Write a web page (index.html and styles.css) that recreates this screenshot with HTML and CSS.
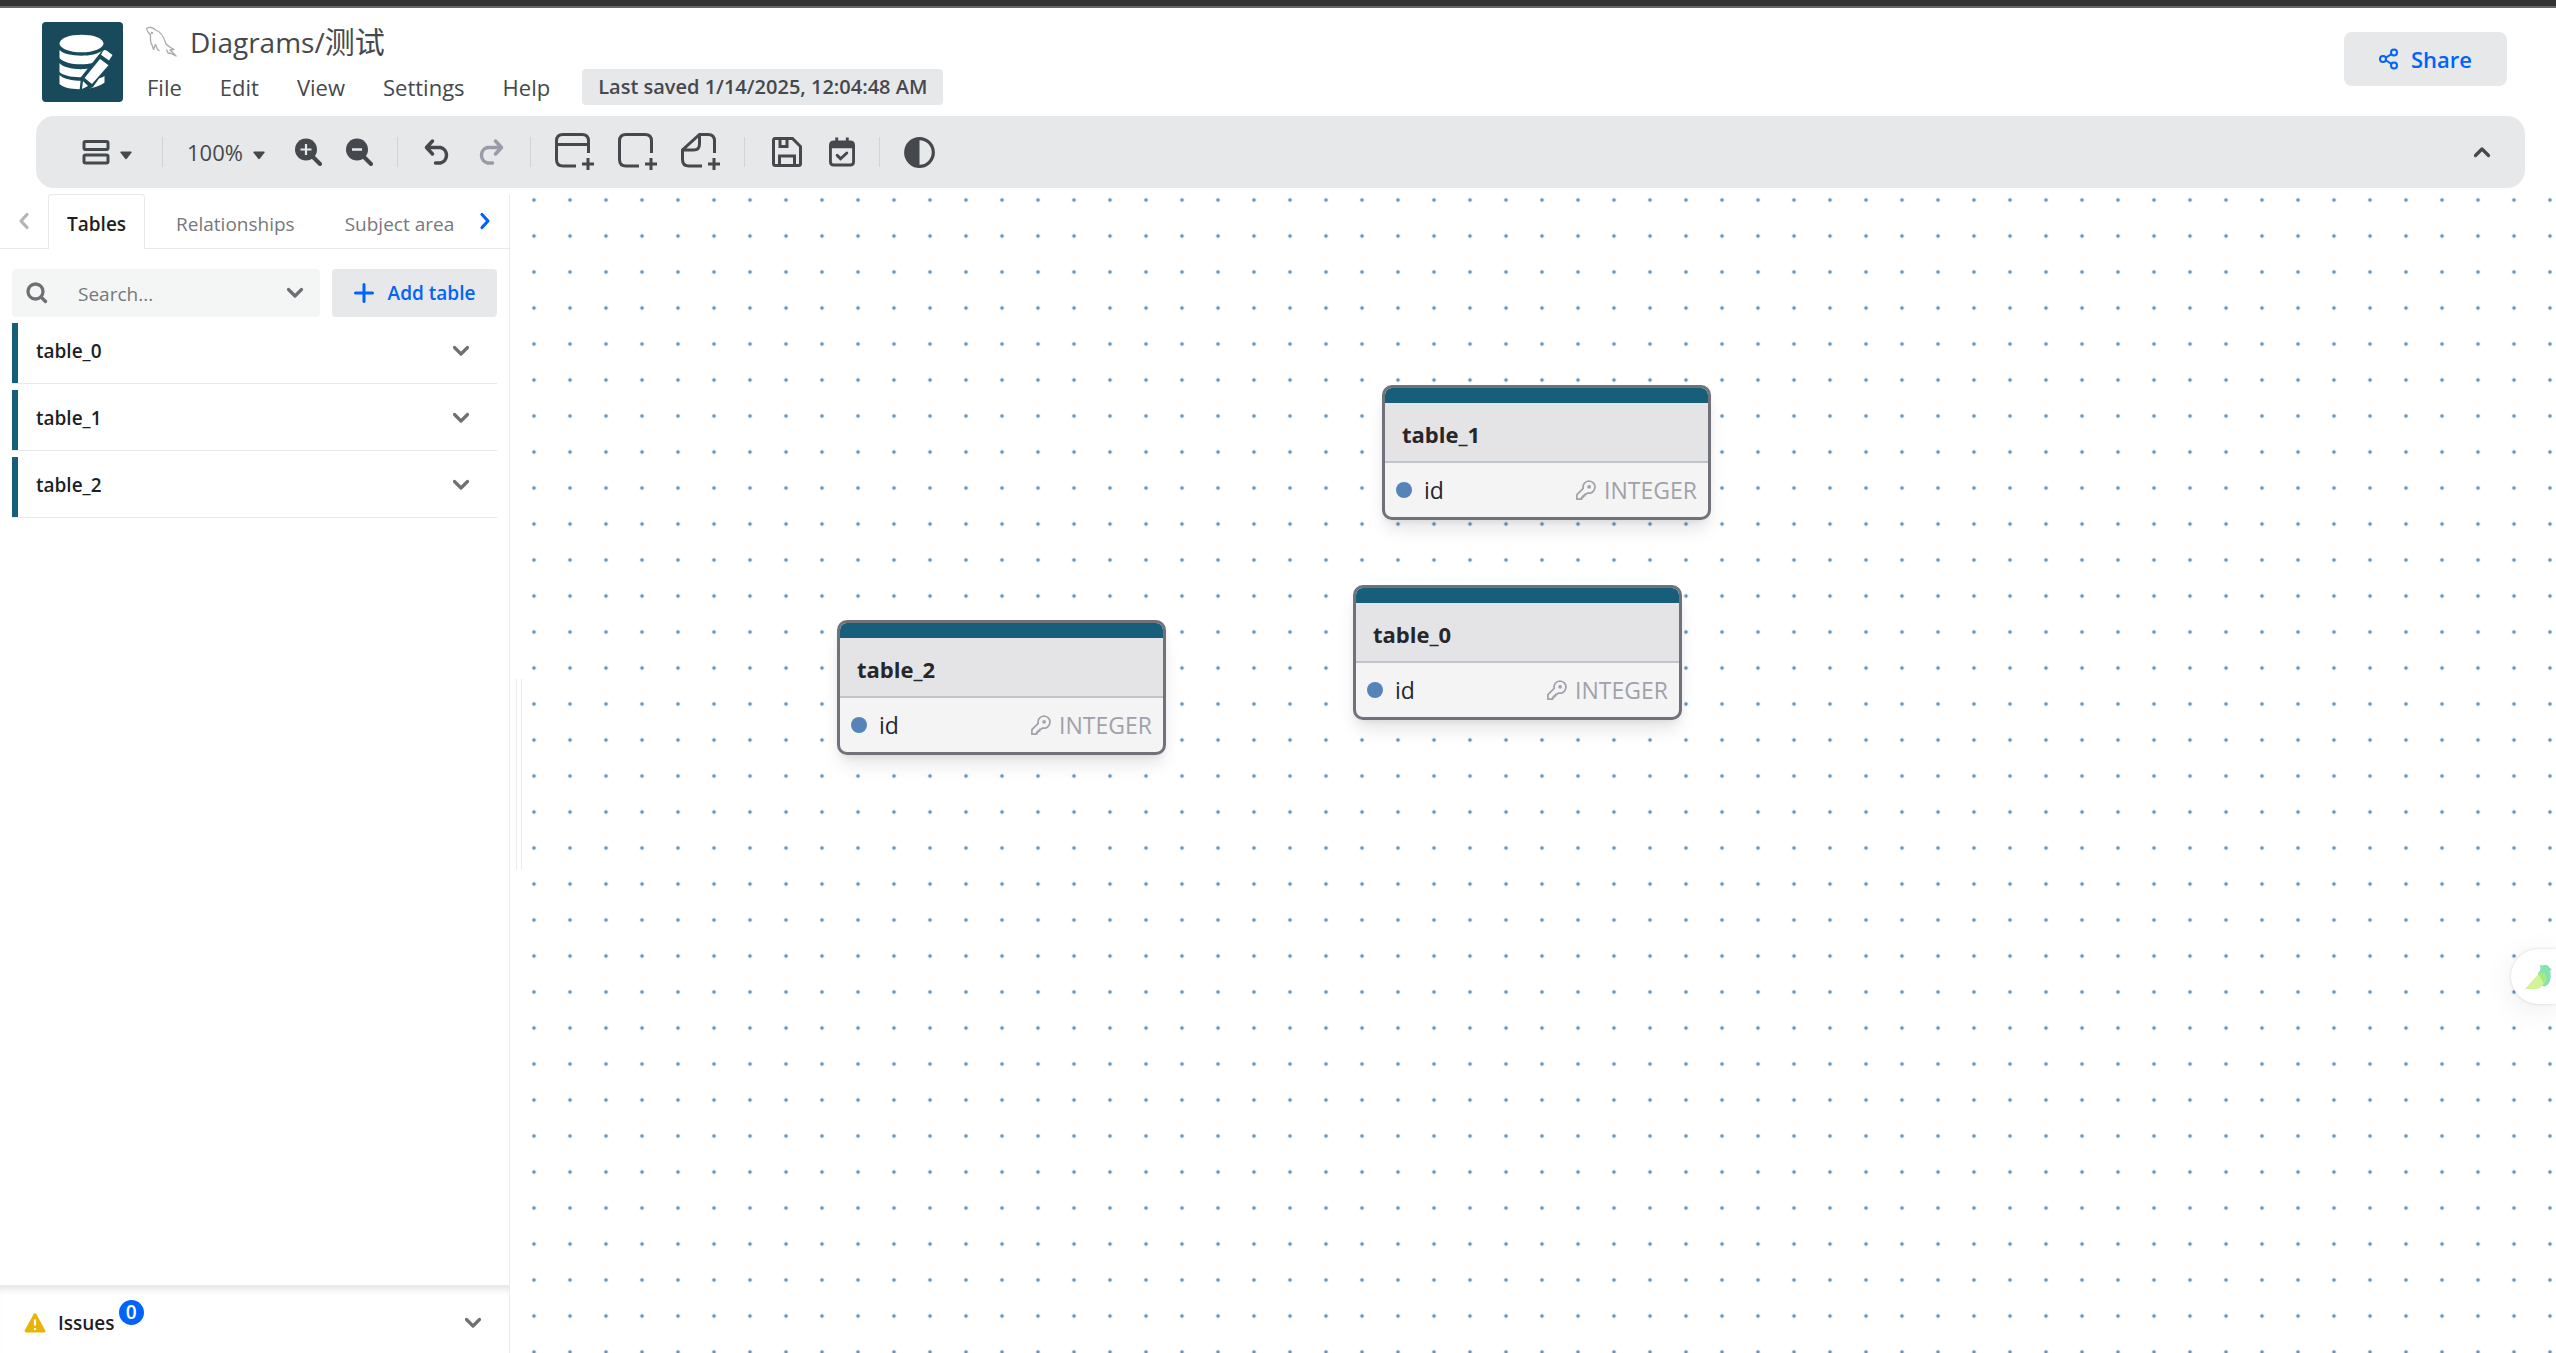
FILE: index.html
```html
<!DOCTYPE html>
<html lang="en">
<head>
<meta charset="utf-8">
<title>Diagrams/测试</title>
<link rel="stylesheet" href="styles.css">
</head>
<body>
<svg class="defs" aria-hidden="true">
  <symbol id="down" viewBox="0 0 18 12"><path d="M2.500 2.500 9 9l6.500-6.500" fill="none" stroke="currentColor" stroke-width="3.200" stroke-linecap="round" stroke-linejoin="round"/></symbol>
  <symbol id="caret" viewBox="0 0 12 9"><path d="M1 .5h10q1.200 0 .5 1.200L7 7.600Q6 8.700 5 7.600L.5 1.700Q-.2.500 1 .5Z" fill="currentColor"/></symbol>
  <symbol id="key" viewBox="0 0 20 20"><g fill="none" stroke="currentColor" stroke-width="1.700" stroke-linejoin="round"><path d="M13 1a6.100 6.100 0 1 1-1.700 12L10 14.300H8.600v1.600H7v1.500H5.600v1.800H.9v-4.500l6.300-6.300A6.100 6.100 0 0 1 13 1Z"/><circle cx="13.100" cy="6.800" r="1"/></g></symbol>
</svg>
<div class="window-edge"></div>
<header class="header">
  <a class="logo" href="#" aria-label="Home">
    <svg viewBox="0 0 81 80">
      <rect width="81" height="80" rx="4" fill="#184a5b"/>
      <g fill="#fff">
        <ellipse cx="39.500" cy="21.500" rx="22" ry="8.800"/>
        <path d="M17.500 28c6 7 34 8 43 .5v7C52 45 24 44 17.500 36Z"/>
        <path d="M17.500 41c6 8 34 8 43 1v7C52 57 24 57 17.500 50Z"/>
        <path d="M17.500 53c6 7 34 8 45 1v6.500C54 68 26 70 17.500 62Z"/>
      </g>
      <path d="M37.500 69l1.500-14L61 27.500q2-2.500 5-.5l5 4q2.500 2 .5 5L51 65l-8 4Z" fill="#184a5b"/>
      <g fill="#fff"><path d="M58 37l8.500 6.200L50 62 42.500 56Z"/><path d="M64.500 28.500l6 4.500-3.500 5.500-8-5.800 2-3.500q1.300-1.800 3.500-.7Z"/><path d="M41 59l5 5-6 3Z"/></g>
    </svg>
  </a>
  <div class="heading">
    <div class="title-row">
      <svg class="dolphin" viewBox="0 0 32 32" fill="none" stroke="#a9a9a9" stroke-width="1.300" stroke-linejoin="round"><path d="M1.500 2.500C4 .8 8 1 10.500 4c5 1.500 8.500 7 10.500 14 1.500 2 5 3.500 8 5.500l-4 .5 6 6-5-2.500-3-.5-1.500-3.500M1.500 2.500c.5 3 2 4 4 6.500 0 3-.5 8 1.500 10l1.500 4.500 2-5 2 5 2 1.500"/><circle cx="7" cy="7" r=".5"/></svg>
      <h1 class="title">Diagrams/<span class="han" lang="zh">测试</span></h1>
    </div>
    <nav class="menu">
      <button>File</button><button>Edit</button><button>View</button><button>Settings</button><button>Help</button>
      <span class="saved">Last saved 1/14/2025, 12:04:48 AM</span>
    </nav>
  </div>
  <button class="share">
    <svg width="20" height="22" viewBox="0 0 20 22" fill="none" stroke="currentColor" stroke-width="2"><circle cx="4" cy="11" r="3"/><circle cx="15" cy="4.500" r="3"/><circle cx="15" cy="17.500" r="3"/><path d="M7 9.500l5.500-3.300M7 12.500l5.500 3.300"/></svg>
    Share
  </button>
</header>

<div class="toolbar" role="toolbar">
  <button class="tool dropdown" aria-label="Layout">
    <svg width="28" height="26" viewBox="0 0 28 26" fill="none" stroke="currentColor" stroke-width="3"><rect x="2" y="2.500" width="24" height="8" rx="1.500"/><rect x="2" y="16" width="24" height="8" rx="1.500"/></svg>
    <svg class="caret" width="12" height="9"><use href="#caret"/></svg>
  </button>
  <span class="divider"></span>
  <button class="tool dropdown zoom"><span>100%</span><svg class="caret" width="12" height="9"><use href="#caret"/></svg></button>
  <button class="tool" aria-label="Zoom in"><svg width="27" height="28" viewBox="0 0 27 28"><path d="M17 18l8 8" stroke="currentColor" stroke-width="4" stroke-linecap="round"/><circle cx="11" cy="11.500" r="11" fill="currentColor"/><path d="M5.500 11.500h11M11 6v11" stroke="#e7e8ea" stroke-width="2.200"/></svg></button>
  <button class="tool" aria-label="Zoom out"><svg width="27" height="28" viewBox="0 0 27 28"><path d="M17 18l8 8" stroke="currentColor" stroke-width="4" stroke-linecap="round"/><circle cx="11" cy="11.500" r="11" fill="currentColor"/><path d="M6 11.500h10" stroke="#e7e8ea" stroke-width="2.500"/></svg></button>
  <span class="divider"></span>
  <button class="tool" aria-label="Undo"><svg width="30" height="28" viewBox="0 0 30 28" fill="none" stroke="currentColor" stroke-width="3.500" stroke-linecap="round" stroke-linejoin="round"><path d="M10.500 3L4.500 9.500l6 6.500M5 9.500H18.500a8 8 0 0 1 0 15.500h-5"/></svg></button>
  <button class="tool" aria-label="Redo" disabled><svg width="30" height="28" viewBox="0 0 30 28" fill="none" stroke="currentColor" stroke-width="3.500" stroke-linecap="round" stroke-linejoin="round"><path d="M19.500 3l6 6.500-6 6.500M25 9.500H11.500a8 8 0 0 0 0 15.500h5"/></svg></button>
  <span class="divider"></span>
  <button class="tool" aria-label="Add table"><svg width="39" height="38" viewBox="0 0 39 38" fill="none" stroke="currentColor" stroke-width="3"><path d="M21 33H8q-6.500 0-6.500-6.500V8Q1.500 1.500 8 1.500h19Q33.500 1.500 33.500 8v12M2 11.500h31"/><path d="M27 31h12M33 25v12"/></svg></button>
  <button class="tool" aria-label="Add area"><svg width="39" height="38" viewBox="0 0 39 38" fill="none" stroke="currentColor" stroke-width="3"><path d="M21 33H8q-6.500 0-6.500-6.500V8Q1.500 1.500 8 1.500h19Q33.500 1.500 33.500 8v12M27 31h12M33 25v12"/></svg></button>
  <button class="tool" aria-label="Add note"><svg width="39" height="38" viewBox="0 0 39 38" fill="none" stroke="currentColor" stroke-width="3"><path d="M21 33H8q-6.500 0-6.500-6.500V17L18.500 1.500H27q6.500 0 6.500 6.500v12M18.500 2v9q0 6-6 6H2M27 31h12M33 25v12"/></svg></button>
  <span class="divider"></span>
  <button class="tool" aria-label="Save"><svg width="36" height="30" viewBox="0 0 36 30" fill="none" stroke="currentColor" stroke-width="3"><path d="M6 1.500h17.500l8 8v17q0 2-2 2H6.500q-2 0-2-2v-23q0-2 1.500-2ZM10.500 28v-9h15v9M11 2v7.500h7V2"/></svg></button>
  <button class="tool" aria-label="To-do"><svg width="26" height="30" viewBox="0 0 27 30"><path d="M5 3h17q5 0 5 5v17q0 5-5 5H5q-5 0-5-5V8Q0 3 5 3Z" fill="currentColor"/><path d="M3 11h21v14q0 2-2 2H5q-2 0-2-2Z" fill="#e7e8ea"/><path d="M8 0v5M19 0v5" stroke="currentColor" stroke-width="3"/><path d="M8.500 18.500l3.500 3.500 6.500-6" fill="none" stroke="currentColor" stroke-width="3" stroke-linecap="round"/></svg></button>
  <span class="divider"></span>
  <button class="tool" aria-label="Theme"><svg width="31" height="31" viewBox="0 0 31 31"><circle cx="15.500" cy="15.500" r="13.800" fill="none" stroke="currentColor" stroke-width="3.200"/><path d="M15.500 1v29a14.500 14.500 0 0 1 0-29Z" fill="currentColor"/></svg></button>
  <button class="tool collapse" aria-label="Hide header"><svg class="flip" width="18" height="12"><use href="#down"/></svg></button>
</div>

<main class="workspace">
  <aside class="sidebar">
    <div class="tabs">
      <button class="arrow" aria-label="Previous tabs" disabled><svg width="12" height="18" viewBox="0 0 12 18" fill="none" stroke="currentColor" stroke-width="3.200" stroke-linecap="round" stroke-linejoin="round"><path d="M9 2.500L3 9l6 6.500"/></svg></button>
      <div class="tab-list" role="tablist">
        <button class="tab active" role="tab" aria-selected="true">Tables</button>
        <button class="tab" role="tab">Relationships</button>
        <button class="tab" role="tab">Subject areas</button>
      </div>
      <button class="arrow next" aria-label="Next tabs"><svg width="12" height="18" viewBox="0 0 12 18" fill="none" stroke="currentColor" stroke-width="3.200" stroke-linecap="round" stroke-linejoin="round"><path d="M3 2.500L9 9l-6 6.500"/></svg></button>
    </div>
    <div class="filter">
      <label class="search">
        <svg width="22" height="22" viewBox="0 0 22 22" fill="none" stroke="currentColor" stroke-width="3.300" stroke-linecap="round"><circle cx="9.500" cy="9.500" r="7.500"/><path d="M15 15l4.500 4.500"/></svg>
        <input type="text" placeholder="Search..." aria-label="Search tables">
        <svg width="18" height="12"><use href="#down"/></svg>
      </label>
      <button class="add"><svg width="20" height="20" viewBox="0 0 20 20" stroke="currentColor" stroke-width="3" stroke-linecap="round"><path d="M10 1.500v17M1.500 10h17"/></svg>Add table</button>
    </div>
    <div class="table-list">
      <button class="entry">table_0<svg width="18" height="12"><use href="#down"/></svg></button>
      <button class="entry">table_1<svg width="18" height="12"><use href="#down"/></svg></button>
      <button class="entry">table_2<svg width="18" height="12"><use href="#down"/></svg></button>
    </div>
    <button class="issues">
      <svg width="22" height="20" viewBox="0 0 22 20"><path d="M9.600 1.200q1.400-1.800 2.800 0l8.800 16q.8 2-1.200 2.300H2Q0 19.200.8 17.200Z" fill="#eab308"/><path d="M11 6.500v6M11 15v2" stroke="#fff" stroke-width="2.200"/></svg>
      <span>Issues</span><span class="badge">0</span>
      <svg class="end" width="18" height="12"><use href="#down"/></svg>
    </button>
  </aside>
  <div class="resizer"><span class="grip"></span></div>
  <section class="canvas">
    <article class="node node-1"><h2>table_1</h2><div class="field"><i></i><span>id</span><svg width="20" height="20"><use href="#key"/></svg><span class="type">INTEGER</span></div></article>
    <article class="node node-0"><h2>table_0</h2><div class="field"><i></i><span>id</span><svg width="20" height="20"><use href="#key"/></svg><span class="type">INTEGER</span></div></article>
    <article class="node node-2"><h2>table_2</h2><div class="field"><i></i><span>id</span><svg width="20" height="20"><use href="#key"/></svg><span class="type">INTEGER</span></div></article>
    <button class="float" aria-label="Assistant">
      <svg width="28" height="26" viewBox="0 0 28 26"><path d="M14.500.5q2 1.500 5 .5 4-.5 5 3l2.500 1-2 2c1.500 5 1 14-6 15.500l-6-2V9q4-3 1.500-8.500Z" fill="#86e2b0"/><path d="M0 25L13 10.500q3-3 6.500-1 2 4 .5 8-2.500 6-8 7.500Z" fill="#d2f396"/><path d="M13 10.500q4-3 6.500-1 2 5-1 10Q16 13 13 10.500Z" fill="#a6e97c"/></svg>
    </button>
  </section>
</main>
</body>
</html>
```
FILE: styles.css
```css
* { box-sizing: border-box; }
body {
  margin: 0;
  height: 100vh;
  display: flex;
  flex-direction: column;
  overflow: hidden;
  background: #fff;
  color: #1c1f23;
  font: 20px/30px "Open Sans", "Noto Sans CJK SC", sans-serif;
}
button {
  border: 0;
  padding: 0;
  background: none;
  color: inherit;
  font: inherit;
  white-space: nowrap;
}
svg { display: block; flex: none; }
.defs { position: absolute; width: 0; height: 0; }
.window-edge { flex: none; height: 8px; background: #333; border-bottom: 2px solid #666; }

.header {
  flex: none;
  display: flex;
  align-items: flex-start;
  height: 108px;
  padding: 14px 49px 0 42px;
  color: #45484c;
}
.logo { width: 81px; margin-right: 22px; }
.heading { flex: 1; }
.title-row { display: flex; align-items: center; gap: 13px; height: 40px; }
.dolphin { width: 32px; height: 32px; }
.title { margin: 0; font-size: 28px; font-weight: 400; line-height: 40px; }
.han { font-size: 30px; }
.menu { display: flex; align-items: center; gap: 38px; height: 50px; padding-left: 2px; font-size: 22px; }
.saved {
  margin-left: -6px;
  padding: 3px 16px;
  border-radius: 4px;
  background: #e7e8ea;
  font-size: 20px;
  font-weight: 600;
}
.share {
  display: flex;
  align-items: center;
  justify-content: center;
  gap: 12px;
  width: 163px;
  height: 54px;
  margin-top: 10px;
  border-radius: 8px;
  background: #e7e8ea;
  color: #0064fa;
  font-size: 22px;
  font-weight: 600;
}

.toolbar {
  flex: none;
  display: flex;
  align-items: center;
  height: 72px;
  margin: 0 31px 0 36px;
  padding: 0 22px 0 34px;
  border-radius: 18px;
  background: #e7e8ea;
  color: #45484c;
}
.tool { display: flex; align-items: center; padding: 0 12px; height: 42px; font-size: 22px; }
.tool:disabled { color: #999ba9; }
.dropdown { gap: 10px; padding-right: 18px; }
.zoom { width: 108px; justify-content: space-between; gap: 0; }
.caret { margin-top: 6px; }
.divider { width: 1px; height: 30px; margin: 0 12px; background: #d2d4d8; }
.collapse { margin-left: auto; }
.flip { transform: rotate(180deg); }

.workspace { flex: 1; display: flex; min-height: 0; }
.sidebar {
  flex: none;
  display: flex;
  flex-direction: column;
  width: 510px;
  margin-top: 6px;
  border-right: 1px solid #ebebec;
}
.tabs { display: flex; height: 55px; border-bottom: 1px solid #e8e9ea; }
.arrow { display: flex; align-items: center; justify-content: center; width: 48px; color: #0064fa; }
.arrow:disabled { color: #b4b5b7; }
.next { width: 48px; margin-left: auto; }
.tab-list { display: flex; gap: 12px; flex: none; width: 407px; height: 55px; overflow: hidden; }
.tab {
  flex: none;
  padding: 4px 18px 0;
  border: 1px solid transparent;
  border-bottom: 0;
  border-radius: 4px 4px 0 0;
  color: #76787b;
  font-size: 19px;
}
.active { border-color: #e8e9ea; background: #fff; color: #1c1f23; font-weight: 600; }
.filter { display: flex; gap: 12px; padding: 20px 12px 6px; }
.search {
  flex: 1;
  display: flex;
  align-items: center;
  min-width: 0;
  height: 48px;
  padding: 0 16px 0 14px;
  border-radius: 4px;
  background: #f4f5f5;
  color: #6e7073;
}
.search input {
  flex: 1;
  min-width: 0;
  padding: 2px 0 0 30px;
  border: 0;
  background: none;
  color: inherit;
  font: inherit;
  font-size: 19px;
}
.search input::placeholder { color: #76787b; opacity: 1; }
.add {
  flex: none;
  display: flex;
  align-items: center;
  justify-content: center;
  gap: 14px;
  width: 165px;
  border-radius: 4px;
  background: #e7e8ea;
  color: #0064fa;
  font-size: 19px;
  font-weight: 600;
}
.table-list { flex: 1; display: flex; flex-direction: column; gap: 6px; padding: 0 12px; }
.entry {
  display: flex;
  align-items: center;
  justify-content: space-between;
  height: 61px;
  padding: 0 27px 4px 24px;
  border-bottom: 1px solid #e8e9ea;
  background: linear-gradient(#175e7a, #175e7a) left / 6px 100% no-repeat;
  font-size: 19px;
  font-weight: 600;
}
.entry svg, .issues .end { color: #6e7073; }
.issues {
  display: flex;
  align-items: center;
  height: 68px;
  padding: 4px 27px 0 24px;
  border-top: 3px solid #ebebec;
  box-shadow: inset 0 6px 6px -4px #e8e8e8;
  font-size: 19px;
  font-weight: 600;
}
.issues > span:first-of-type { margin-left: 12px; }
.badge {
  width: 25px;
  height: 25px;
  margin: -20px 0 0 4px;
  border-radius: 50%;
  background: #0064fa;
  color: #fff;
  line-height: 25px;
}
.end { margin-left: auto; }
.resizer { flex: none; display: flex; align-items: center; justify-content: center; width: 12px; padding: 7px 0 0 6px; }
.grip { width: 6px; height: 191px; border: solid #ebebec; border-width: 0 1px; }

.canvas {
  flex: 1;
  position: relative;
  overflow: hidden;
  background: radial-gradient(circle, #5b93bf 1px, #dce8f2 2px, transparent 3px) -6px -6px / 36px 36px;
}
.node {
  position: absolute;
  width: 329px;
  height: 135px;
  border: 3px solid #71717a;
  border-radius: 10px;
  overflow: hidden;
  background: #f4f4f5;
  box-shadow: 0 12px 18px -3px #0000001a, 0 4px 8px -4px #0000001a;
  font-size: 23px;
}
.node-1 { left: 860px; top: 197px; }
.node-0 { left: 831px; top: 397px; }
.node-2 { left: 315px; top: 432px; }
.node h2 {
  height: 75px;
  margin: 0;
  padding: 16px 17px 0;
  border-top: 15px solid #175e7a;
  border-bottom: 2px solid #bfc4cb;
  background: #e4e4e7;
  color: #27272a;
  font-size: 22px;
  font-weight: 700;
}
.field { display: flex; align-items: center; height: 54px; padding: 0 11px; color: #27272a; }
.field i { width: 16px; height: 16px; margin-right: 12px; border-radius: 50%; background: #5783bb; }
.field svg { margin-left: auto; color: #a1a1aa; }
.type { margin-left: 8px; color: #a1a1aa; }
.float {
  position: absolute;
  right: 0;
  top: 761px;
  width: 45px;
  height: 55px;
  padding-left: 14px;
  border-radius: 28px 0 0 28px;
  background: #fff;
  box-shadow: 0 0 3px #00000026, 0 6px 30px #00000014;
}
```
